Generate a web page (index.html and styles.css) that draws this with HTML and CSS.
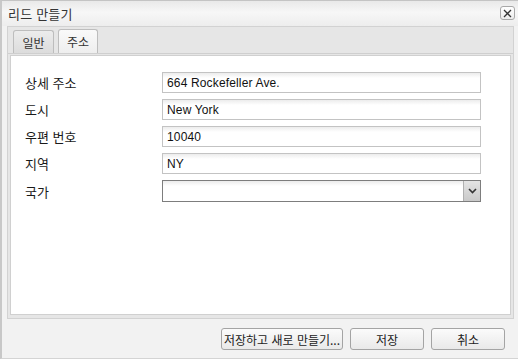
FILE: index.html
```html
<!DOCTYPE html>
<html lang="ko">
<head>
  <meta charset="UTF-8">
  <title>리드 만들기</title>
  <link rel="stylesheet" href="styles.css">
</head>
<body>
  <div class="dialog">
    <!-- TITLE -->
    <div class="titlebar">
      <span class="title">리드 만들기</span>
      <span class="close">
        <svg width="9" height="9" viewBox="0 0 9 9"><path d="M1 1 L8 8 M8 1 L1 8" stroke="#333" stroke-width="1.3" fill="none"/></svg>
      </span>
    </div>

    <!-- TABS -->
    <div class="tabpanel">
      <div class="tabs">
        <div class="tab">일반</div>
        <div class="tab active">주소</div>
      </div>
      <div class="tab-body">
        <div class="form">
          <label class="label">상세 주소</label>
          <div class="input">664 Rockefeller Ave.</div>
          <label class="label">도시</label>
          <div class="input">New York</div>
          <label class="label">우편 번호</label>
          <div class="input">10040</div>
          <label class="label">지역</label>
          <div class="input">NY</div>
          <label class="label">국가</label>
          <div class="select">
            <span class="select-value"></span>
            <span class="select-btn">
              <svg width="9" height="6" viewBox="0 0 9 6"><path d="M1 1 L4.5 4.5 L8 1" stroke="#333" stroke-width="1.6" fill="none"/></svg>
            </span>
          </div>
        </div>
      </div>
    </div>

    <!-- BUTTONS -->
    <div class="footer">
      <button class="btn wide">저장하고 새로 만들기...</button>
      <button class="btn">저장</button>
      <button class="btn">취소</button>
    </div>
  </div>
</body>
</html>
```

FILE: styles.css
```css
* {
  margin: 0;
  padding: 0;
  box-sizing: border-box;
}
body {
  background: #f2f2f2;
  font-family: "Noto Sans CJK KR", "Liberation Sans", sans-serif;
  color: #222;
}

.dialog {
  width: 518px;
  height: 359px;
  display: flex;
  flex-direction: column;
  background: #f2f2f2;
  border-left: 2px solid #c8c8c8;
  border-top: 1px solid #c4c4c4;
  border-bottom: 1px solid #d4d4d4;
}

/* TITLE BAR */
.titlebar {
  height: 25px;
  display: flex;
  align-items: center;
  justify-content: space-between;
  padding: 0 3px 0 6px;
  background: linear-gradient(#e9e9e9, #f7f7f7 45%, #ededed);
}
.title {
  font-size: 13px;
  color: #333;
  letter-spacing: 0.2px;
}
.close {
  width: 15px;
  height: 14px;
  margin-top: -1px;
  display: flex;
  align-items: center;
  justify-content: center;
  border: 1px solid #a8a8a8;
  border-radius: 3px;
  background: linear-gradient(#ffffff, #ececec);
}

/* TAB PANEL */
.tabpanel {
  height: 293px;
  margin: 0 4px 0 5px;
  display: flex;
  flex-direction: column;
  border: 1px solid #d2d2d2;
  background: #e6e6e6;
}
.tabs {
  height: 27px;
  display: flex;
  align-items: flex-end;
  gap: 4px;
  padding-left: 5px;
  border-bottom: 1px solid #cfcfcf;
}
.tab {
  width: 41px;
  height: 23px;
  display: flex;
  align-items: center;
  justify-content: center;
  font-size: 12px;
  color: #333;
  border: 1px solid #bdbdbd;
  border-bottom: none;
  border-radius: 3px 3px 0 0;
  background: linear-gradient(#ececec, #dcdcdc);
}
.tab.active {
  width: 40px;
  height: 24px;
  background: linear-gradient(#fafafa, #eeeeee);
}
.tab-body {
  flex: 1;
  margin: 1px 2px 3px 2px;
  border: 1px solid #d0d0d0;
  background: #fff;
}

/* FORM */
.form {
  display: grid;
  grid-template-columns: 137px 319px;
  row-gap: 6px;
  padding: 16px 0 0 14px;
  align-items: center;
}
.label {
  font-size: 13px;
  color: #1a1a1a;
}
.input {
  height: 21px;
  padding: 0 4px;
  display: flex;
  align-items: center;
  font-family: "Liberation Sans", sans-serif;
  font-size: 12px;
  letter-spacing: 0.15px;
  color: #111;
  border: 1px solid #c3c3c3;
  background: linear-gradient(#ececec, #ffffff 5px);
}
.select {
  height: 22px;
  display: flex;
  border: 1px solid #7d7d7d;
  background: linear-gradient(#ececec, #ffffff 5px);
}
.select-value {
  flex: 1;
}
.select-btn {
  width: 17px;
  display: flex;
  align-items: center;
  justify-content: center;
  border-left: 1px solid #b0b0b0;
  background: linear-gradient(#e4e4e4, #c9c9c9);
}

/* FOOTER */
.footer {
  flex: 1;
  display: flex;
  justify-content: flex-end;
  align-items: flex-start;
  gap: 7px;
  padding: 9px 13px 0 0;
}
.btn {
  width: 74px;
  height: 22px;
  font-family: "Noto Sans CJK KR", "Liberation Sans", sans-serif;
  font-size: 12px;
  color: #222;
  border: 1px solid #a4a4a4;
  border-radius: 3px;
  background: linear-gradient(#fbfbfb, #e9e9e9);
}
.btn.wide {
  width: 122px;
  padding: 0;
}
```
